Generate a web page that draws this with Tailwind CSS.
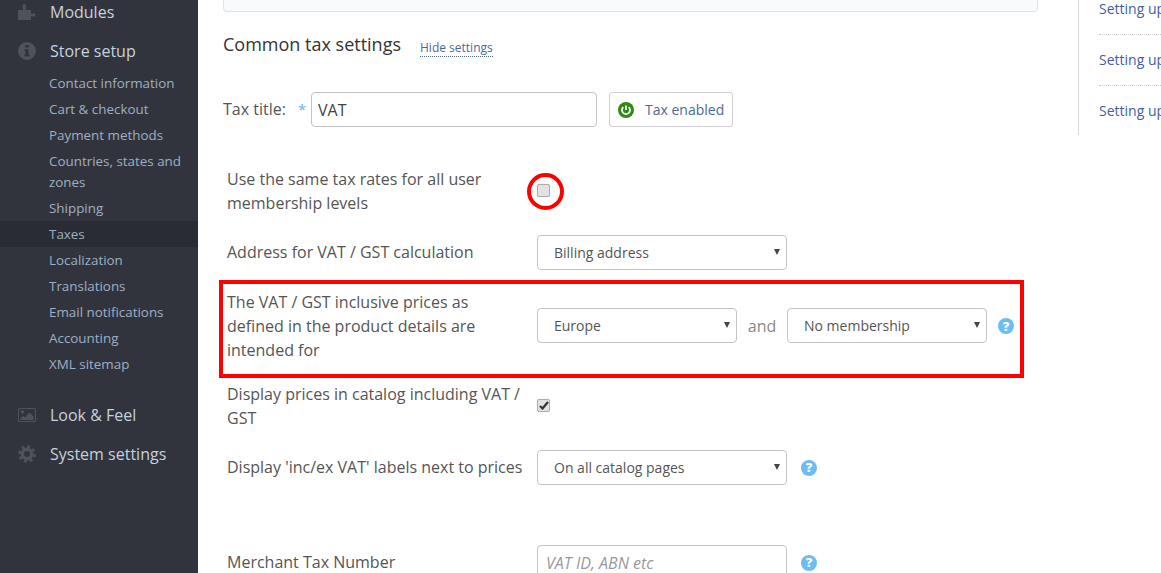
<!DOCTYPE html>
<html lang="en">
<head>
  <meta charset="UTF-8" />
  <title>Tax settings</title>
  <script src="https://cdn.jsdelivr.net/npm/@tailwindcss/browser@4"></script>
</head>
<body class="bg-white font-['Open_Sans',sans-serif] overflow-hidden">
  <div class="relative flex w-[1161px] h-[573px] overflow-hidden">

    <!-- sidebar -->
    <aside class="w-[198px] shrink-0 bg-[#32343d] text-[13.4px] text-[#9db0c2]">
      <a class="flex items-center h-6 pl-[18px] text-[16px] text-[#c5d1dd]">
        <svg class="w-[18px] h-[18px] mr-[14px] text-[#50525a]" viewBox="0 0 18 18" fill="currentColor"><path d="M0 7h4.200c.8 0 1-.5.7-1.200C4.300 4.600 4.300 1 6.300 1s2 3.600 1.400 4.800C7.400 6.500 7.600 7 8.400 7H13v3.100c0 .8.500 1 1.200.7 1.200-.6 3.300-.6 3.300 1.200s-2.100 1.800-3.300 1.200c-.7-.3-1.200-.1-1.200.7V17H0z"/></svg>
        Modules
      </a>
      <a class="flex items-center h-6 mt-[15px] pl-[18px] text-[16px] text-[#c5d1dd]">
        <svg class="w-[18px] h-[18px] mr-[14px] text-[#50525a]" viewBox="0 0 18 18" fill="currentColor"><path fill-rule="evenodd" d="M9 0a9 9 0 1 1 0 18A9 9 0 0 1 9 0zM7.300 3v2.600h3.400V3zM6.500 7.300v1.800h1v3.300h-1v2h5v-2h-1V7.300z"/></svg>
        Store setup
      </a>
      <ul class="mt-[7px] leading-[21px]">
        <li class="pl-[49px] py-[2.5px]">Contact information</li>
        <li class="pl-[49px] py-[2.5px]">Cart &amp; checkout</li>
        <li class="pl-[49px] py-[2.5px]">Payment methods</li>
        <li class="pl-[49px] pr-3 py-[2.5px]">Countries, states and zones</li>
        <li class="pl-[49px] py-[2.5px]">Shipping</li>
        <li class="pl-[49px] py-[2.5px] bg-[#2a2c33]">Taxes</li>
        <li class="pl-[49px] py-[2.5px]">Localization</li>
        <li class="pl-[49px] py-[2.5px]">Translations</li>
        <li class="pl-[49px] py-[2.5px]">Email notifications</li>
        <li class="pl-[49px] py-[2.5px]">Accounting</li>
        <li class="pl-[49px] py-[2.5px]">XML sitemap</li>
      </ul>
      <a class="flex items-center h-6 mt-[26px] pl-[18px] text-[16px] text-[#c5d1dd]">
        <svg class="w-[18px] h-[18px] mr-[14px] text-[#50525a]" viewBox="0 0 18 18" fill="currentColor"><path fill-rule="evenodd" d="M1.500 2h15A1.500 1.500 0 0 1 18 3.500v11a1.500 1.500 0 0 1-1.500 1.500h-15A1.500 1.500 0 0 1 0 14.500v-11A1.500 1.500 0 0 1 1.500 2zM1 3v12h16V3zM4.500 4.200a1.700 1.700 0 1 1 0 3.400 1.700 1.700 0 0 1 0-3.400zM2.500 14v-2l2.500-2.200 2 1.700 4.500-5 4 4.300V14z"/></svg>
        Look &amp; Feel
      </a>
      <a class="flex items-center h-6 mt-[15px] pl-[18px] text-[16px] text-[#c5d1dd]">
        <svg class="w-[18px] h-[18px] mr-[14px] text-[#50525a]" viewBox="0 0 18 18" fill="none" stroke="currentColor"><circle cx="9" cy="9" r="4.700" stroke-width="3.400"/><circle cx="9" cy="9" r="7.300" stroke-width="3" stroke-dasharray="3 2.730"/></svg>
        System settings
      </a>
    </aside>

    <!-- main column -->
    <main class="w-[880px] shrink-0 pl-[25px]">
      <div class="w-[815px] h-5 -mt-2 bg-[#f8fafc] border border-[#dbe3ec] rounded-[4px]"></div>

      <div class="flex items-baseline mt-[19px]">
        <h2 class="text-[18px] leading-[26px] text-[#333]">Common tax settings</h2>
        <a class="ml-[19px] translate-y-px text-[12px] leading-[16px] text-[#4c6a94] border-b border-dotted border-[#4c6a94]">Hide settings</a>
      </div>

      <div class="flex items-center mt-[35px]">
        <label class="w-[63px] text-[16px] text-[#555] pb-px">Tax title:</label>
        <span class="w-[25px] pl-3 text-[15px] text-[#6ab7e0]">*</span>
        <input value="VAT" class="w-[286px] h-[35px] px-[6px] text-[16px] text-[#444] border border-[#c4c4c4] rounded-[4px]" />
        <button class="flex items-center ml-3 w-[124px] h-[35px] pl-2 text-[14px] text-[#4c6a94] border border-[#d0d0d0] rounded-[3px]">
          <svg class="w-4 h-4 mr-[11px]" viewBox="0 0 16 16"><circle cx="8" cy="8" r="8" fill="#2e8b12"/><path d="M5.300 5.200a4 4 0 1 0 5.400 0" fill="none" stroke="#fff" stroke-width="1.800"/><path d="M8 3.500V8" stroke="#fff" stroke-width="1.800"/></svg>
          Tax enabled
        </button>
      </div>

      <div class="flex flex-col gap-5 mt-10 pl-1 text-[16px] leading-6 text-[#555]">
        <div class="flex items-center">
          <label class="w-[310px]">Use the same tax rates for all user membership levels</label>
          <input type="checkbox" class="appearance-none w-[13px] h-[13px] mb-px bg-[#e2e2e2] border border-[#adadad] rounded-[2px] shadow-[0_0_1px_#ccc]" />
        </div>

        <div class="flex items-center">
          <label class="w-[310px] pb-px">Address for VAT / GST calculation</label>
          <div class="relative w-[250px]">
            <select class="appearance-none w-full h-[35px] pl-4 text-[14px] text-[#555] bg-white border border-[#c4c4c4] rounded-[4px]"><option>Billing address</option></select>
            <span class="absolute right-[7px] top-[14px] w-0 h-0 border-x-[3px] border-t-[6px] border-x-transparent border-t-[#444]"></span>
          </div>
        </div>

        <div class="flex items-center">
          <label class="w-[310px] pr-8">The VAT / GST inclusive prices as defined in the product details are intended for</label>
          <div class="relative w-[200px] mb-px">
            <select class="appearance-none w-full h-[35px] pl-4 text-[14px] text-[#555] bg-white border border-[#c4c4c4] rounded-[4px]"><option>Europe</option></select>
            <span class="absolute right-[7px] top-[14px] w-0 h-0 border-x-[3px] border-t-[6px] border-x-transparent border-t-[#444]"></span>
          </div>
          <span class="w-[50px] mb-px text-center text-[#888]">and</span>
          <div class="relative w-[200px] mb-px">
            <select class="appearance-none w-full h-[35px] pl-4 text-[14px] text-[#555] bg-white border border-[#c4c4c4] rounded-[4px]"><option>No membership</option></select>
            <span class="absolute right-[7px] top-[14px] w-0 h-0 border-x-[3px] border-t-[6px] border-x-transparent border-t-[#444]"></span>
          </div>
          <span class="flex items-center justify-center w-4 h-4 ml-[11px] rounded-full bg-[#6cbcf7] text-white text-[13px] font-extrabold leading-none">?</span>
        </div>

        <div class="flex items-center">
          <label class="w-[310px]">Display prices in catalog including VAT / GST</label>
          <span class="relative w-[13px] h-[13px] mb-[2px]">
            <input type="checkbox" checked class="appearance-none block w-[13px] h-[13px] bg-[#e2e2e2] border border-[#adadad] rounded-[2px] shadow-[0_0_1px_#ccc]" />
            <svg class="absolute left-[2px] top-[2px] w-[10px] h-[9px]" viewBox="0 0 10 9"><path d="M1 5l2.500 2.500L9 1" fill="none" stroke="#333" stroke-width="2.200"/></svg>
          </span>
        </div>

        <div class="flex items-center">
          <label class="w-[310px] whitespace-nowrap pb-px">Display 'inc/ex VAT' labels next to prices</label>
          <div class="relative w-[250px]">
            <select class="appearance-none w-full h-[35px] pl-4 text-[14px] text-[#555] bg-white border border-[#c4c4c4] rounded-[4px]"><option>On all catalog pages</option></select>
            <span class="absolute right-[7px] top-[14px] w-0 h-0 border-x-[3px] border-t-[6px] border-x-transparent border-t-[#444]"></span>
          </div>
          <span class="flex items-center justify-center w-4 h-4 ml-[14px] rounded-full bg-[#6cbcf7] text-white text-[13px] font-extrabold leading-none">?</span>
        </div>

        <div class="flex items-center mt-10">
          <label class="w-[310px] pb-px">Merchant Tax Number</label>
          <input placeholder="VAT ID, ABN etc" class="w-[250px] h-[35px] px-2 text-[16px] italic placeholder:text-[#999] border border-[#c4c4c4] rounded-[4px]" />
          <span class="flex items-center justify-center w-4 h-4 ml-[14px] rounded-full bg-[#6cbcf7] text-white text-[13px] font-extrabold leading-none">?</span>
        </div>
      </div>
    </main>

    <!-- help links -->
    <div class="h-[135px] flex-1 min-w-0 border-l border-[#d5dae0] pl-5 overflow-hidden text-[14px] text-[#3f5ea8] whitespace-nowrap">
      <div class="h-[35px] border-b border-dotted border-[#ccc] leading-[18px]">Setting up</div>
      <div class="h-[51px] pt-4 border-b border-dotted border-[#ccc] leading-[18px]">Setting up</div>
      <div class="pt-4 leading-[18px]">Setting up</div>
    </div>

    <!-- red annotations drawn over the screenshot -->
    <div class="absolute left-[219px] top-[280px] w-[805px] h-[98px] border-4 border-[#ff0000]"></div>
    <div class="absolute left-[527px] top-[173px] w-[37px] h-[37px] rounded-full border-4 border-[#ff0000]"></div>
  </div>
</body>
</html>
